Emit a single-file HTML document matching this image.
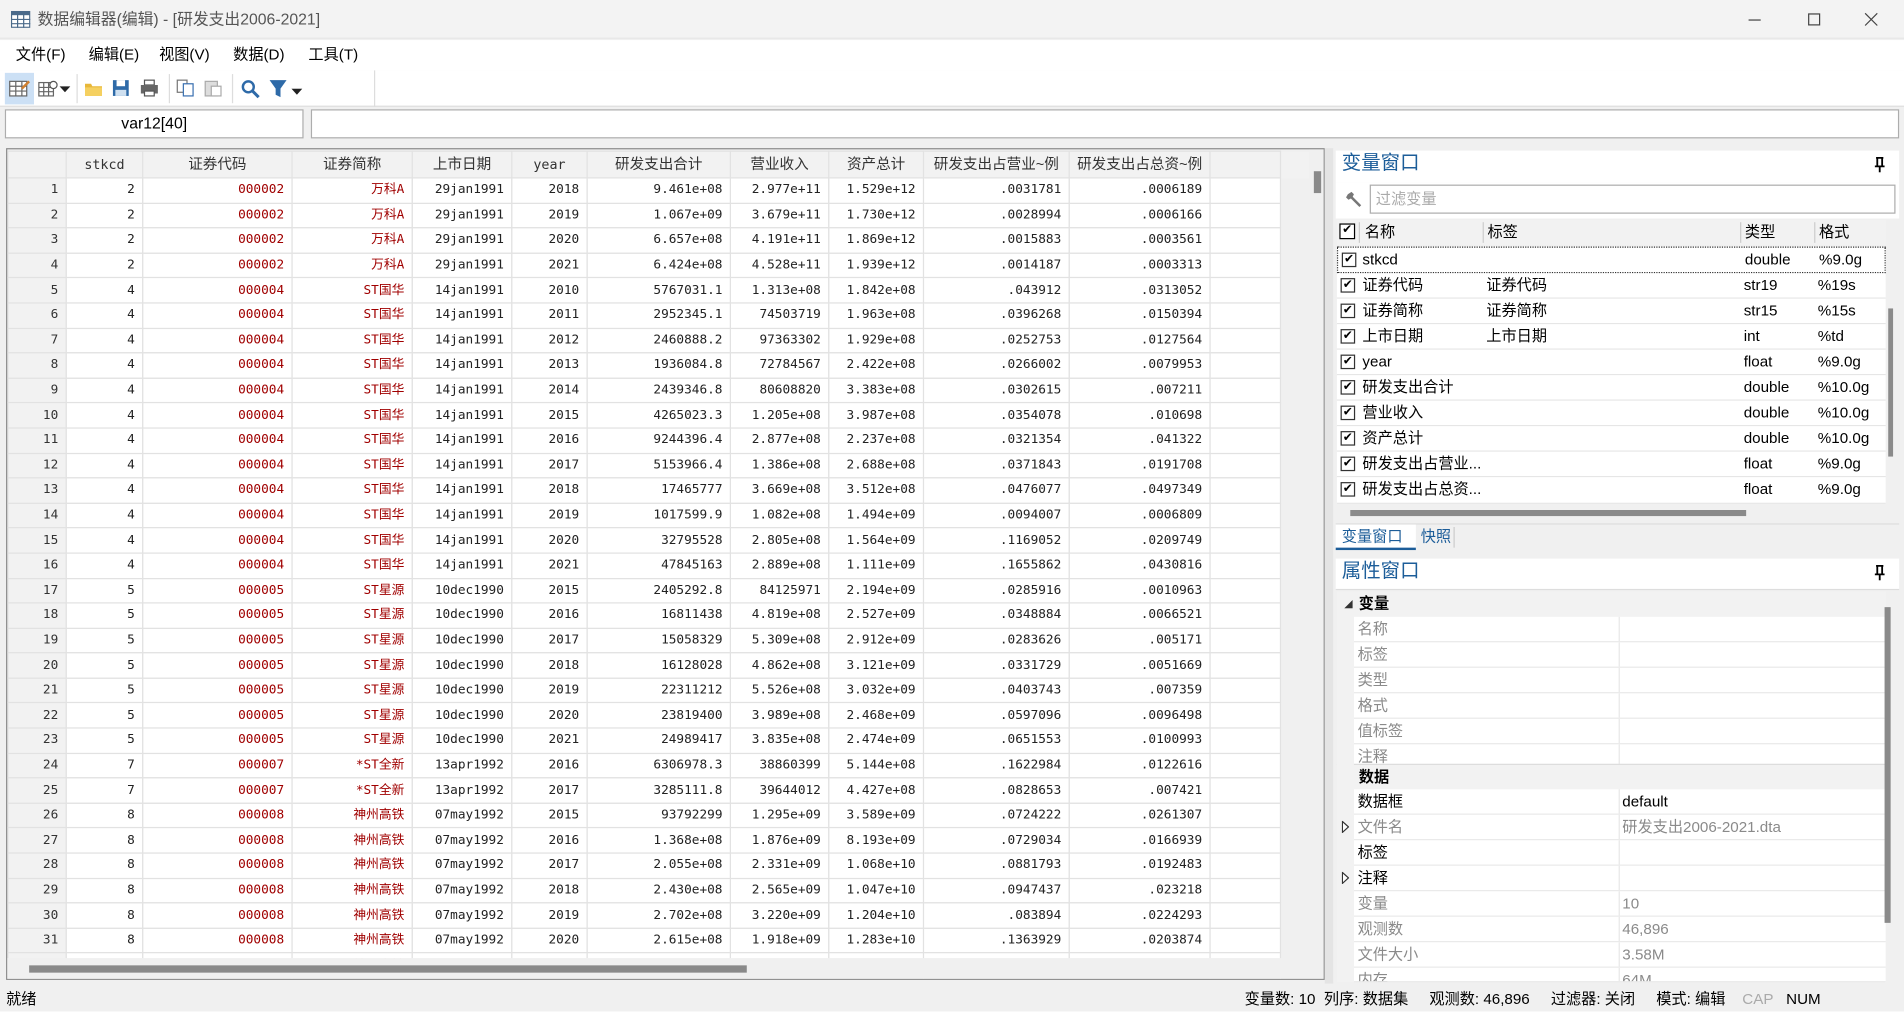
<!DOCTYPE html>
<html><head><meta charset="utf-8">
<style>
*{box-sizing:border-box;margin:0;padding:0}
html,body{width:1904px;height:1012px;overflow:hidden;background:#fff}
#w{position:absolute;left:0;top:0;width:1568px;height:833px;transform:scale(1.214286);transform-origin:0 0;background:#f0f0f0;font-family:"Liberation Sans","Noto Sans CJK SC",sans-serif;font-size:12px;color:#000;overflow:hidden;line-height:15px}
.a{position:absolute}
#title{left:0;top:0;width:1568px;height:32px;background:#f3f3f3;border-bottom:1px solid #e6e6e6}
#menu{left:0;top:33px;width:1568px;height:25px;background:#fff}
#menu span{position:absolute;top:5px;font-size:12.5px}
#tb{left:0;top:58px;width:1568px;height:30px;background:#fff;border-bottom:1px solid #ddd}
.box{background:#fff;border:1px solid #adadad}
#grid{left:5px;top:122px;width:1086px;height:685px;background:#f0f0f0;border:1px solid #8a8a8a;overflow:hidden}
table{border-collapse:collapse;table-layout:fixed;position:absolute;left:0;top:1px}
td{height:20.6px;line-height:13px;border:1px solid #e2e2e2;background:#fff;text-align:right;padding:0 6px;font-family:"DejaVu Sans Mono","Noto Sans CJK SC",monospace;font-size:10.5px;white-space:nowrap;overflow:hidden;color:#222;vertical-align:middle}
tr.h td{height:22px;background:#f2f2f2;text-align:center;font-family:"Liberation Sans","Noto Sans CJK SC",sans-serif;font-size:12px;color:#333}
tr.h td.m{font-family:"DejaVu Sans Mono",monospace;font-size:11px}
td.n{background:#f2f2f2;color:#333}
td.r{color:#a00000}
td.e{background:#fff}
td.g{background:#f0f0f0;border:none}
#right{left:1098px;top:122px;width:468px;height:687px;background:#f0f0f0}
.ptitle{font-size:16px;color:#1c5d99;line-height:20px}
.vrow{position:absolute;left:1101px;width:452px;height:21px;border-bottom:1px solid #e6e6e6;background:#fff;font-size:12.5px}
.vrow span{position:absolute;top:3px;line-height:15px}
.cb{position:absolute;left:3px;top:4px;width:12px;height:12px;border:1px solid #333;background:#fff;font-size:10px;line-height:10px;text-align:center}
.prow{position:absolute;left:1115px;width:438px;height:20.8px;border-bottom:1px solid #e8e8e8;background:#fff;font-size:12.5px;color:#8a8a8a}
.prow span{position:absolute;top:3px;line-height:15px}
.prow .v{left:221px}
.prow .l{left:3px}
.prow:after{content:"";position:absolute;left:218px;top:0;bottom:0;border-left:1px solid #e8e8e8}
.sec{position:absolute;left:1101px;width:452px;height:21px;background:#f2f2f2;font-weight:bold;font-size:12.5px}
.sec span{line-height:15px}
#status{left:0;top:813px;width:1568px;height:20px;background:#f0f0f0;font-size:12.5px}
</style></head><body><div id="w">

<div class="a" id="title">
<svg class="a" style="left:9px;top:9px" width="16" height="14" viewBox="0 0 16 14"><rect x=".5" y=".5" width="15" height="13" fill="#fff" stroke="#4a6a8a"/><rect x=".5" y=".5" width="15" height="3" fill="#4a6a8a"/><path d="M5.5 3v11M10.5 3v11M0 7h16M0 10.5h16" stroke="#4a6a8a"/></svg>
<span class="a" style="left:31px;top:8px;font-size:13px;color:#555">数据编辑器(编辑) - [研发支出2006-2021]</span>
<div class="a" style="left:1440px;top:16px;width:10px;border-top:1px solid #444"></div>
<div class="a" style="left:1489px;top:11px;width:10px;height:10px;border:1px solid #444"></div>
<svg class="a" style="left:1535px;top:10px" width="12" height="12"><path d="M1 1l10 10M11 1L1 11" stroke="#444"/></svg>
</div>

<div class="a" id="menu">
<span style="left:13px">文件(F)</span><span style="left:73px">编辑(E)</span><span style="left:131px">视图(V)</span><span style="left:192px">数据(D)</span><span style="left:254px">工具(T)</span>
</div>

<div class="a" id="tb">
<div class="a" style="left:4px;top:2px;width:24px;height:26px;background:#cce0f5"></div>
<svg class="a" style="left:7px;top:7px" width="18" height="16"><rect x="1" y="2" width="14" height="12" fill="#fff" stroke="#666"/><path d="M1 6h14M1 10h14M6 2v12M11 2v12" stroke="#666"/><path d="M11 8l6-6" stroke="#d08030" stroke-width="2"/></svg>
<svg class="a" style="left:31px;top:7px" width="18" height="16"><rect x="1" y="3" width="12" height="11" fill="#fff" stroke="#666"/><path d="M1 7h12M1 10.5h12M5 3v11M9 3v11" stroke="#666"/><circle cx="13" cy="5" r="3" fill="#fff" stroke="#555"/></svg>
<svg class="a" style="left:49px;top:13px" width="9" height="5"><path d="M0 0h9L4.5 5z" fill="#222"/></svg>
<div class="a" style="left:63px;top:3px;height:24px;border-left:1px solid #ddd"></div>
<svg class="a" style="left:69px;top:8px" width="16" height="14"><path d="M1 3h5l1 2h8v8H1z" fill="#e8b83a"/><path d="M1 6h14v7H1z" fill="#f5d060"/></svg>
<svg class="a" style="left:92px;top:7px" width="15" height="15"><rect x="1" y="1" width="13" height="13" fill="#2e6aa8"/><rect x="4" y="1" width="7" height="5" fill="#fff"/><rect x="3" y="9" width="9" height="5" fill="#cfe0f0"/></svg>
<svg class="a" style="left:115px;top:7px" width="16" height="15"><rect x="4" y="1" width="8" height="4" fill="#fff" stroke="#555"/><rect x="1" y="5" width="14" height="7" fill="#666"/><rect x="4" y="10" width="8" height="4" fill="#fff" stroke="#555"/></svg>
<div class="a" style="left:139px;top:3px;height:24px;border-left:1px solid #ddd"></div>
<svg class="a" style="left:145px;top:7px" width="16" height="15"><rect x="1" y="1" width="8" height="10" fill="#fff" stroke="#777"/><rect x="6" y="4" width="8" height="10" fill="#fff" stroke="#3a70b0"/></svg>
<svg class="a" style="left:168px;top:7px" width="16" height="15"><rect x="1" y="2" width="10" height="12" fill="#ddd" stroke="#aaa"/><rect x="6" y="6" width="8" height="8" fill="#fff" stroke="#aaa"/></svg>
<div class="a" style="left:191px;top:3px;height:24px;border-left:1px solid #ddd"></div>
<svg class="a" style="left:198px;top:7px" width="16" height="16"><circle cx="6.5" cy="6.5" r="4.5" fill="none" stroke="#2e6aa8" stroke-width="2"/><path d="M10 10l5 5" stroke="#2e6aa8" stroke-width="2.5"/></svg>
<svg class="a" style="left:221px;top:7px" width="16" height="16"><path d="M1 1h14l-5 7v7l-4-2V8z" fill="#2e6aa8"/></svg>
<svg class="a" style="left:240px;top:15px" width="9" height="5"><path d="M0 0h9L4.5 5z" fill="#222"/></svg>
<div class="a" style="left:308px;top:0;height:30px;border-left:1px solid #ddd"></div>
</div>

<div class="a box" style="left:4px;top:90px;width:246px;height:24px;text-align:center;font-size:13px;line-height:22px">var12[40]</div>
<div class="a box" style="left:256px;top:90px;width:1308px;height:24px"></div>

<div class="a" id="grid">
<table>
<colgroup><col style="width:48px"><col style="width:63px"><col style="width:123px"><col style="width:99px"><col style="width:82px"><col style="width:62px"><col style="width:118px"><col style="width:81px"><col style="width:78px"><col style="width:120px"><col style="width:116px"><col style="width:58px"><col style="width:24px"></colgroup>
<tr class="h"><td></td><td class="m">stkcd</td><td>证券代码</td><td>证券简称</td><td>上市日期</td><td class="m">year</td><td>研发支出合计</td><td>营业收入</td><td>资产总计</td><td>研发支出占营业~例</td><td>研发支出占总资~例</td><td></td><td class="g"></td></tr>
<tr><td class="n">1</td><td>2</td><td class="r">000002</td><td class="r">万科A</td><td>29jan1991</td><td>2018</td><td>9.461e+08</td><td>2.977e+11</td><td>1.529e+12</td><td>.0031781</td><td>.0006189</td><td class="e"></td><td class="g"></td></tr>
<tr><td class="n">2</td><td>2</td><td class="r">000002</td><td class="r">万科A</td><td>29jan1991</td><td>2019</td><td>1.067e+09</td><td>3.679e+11</td><td>1.730e+12</td><td>.0028994</td><td>.0006166</td><td class="e"></td><td class="g"></td></tr>
<tr><td class="n">3</td><td>2</td><td class="r">000002</td><td class="r">万科A</td><td>29jan1991</td><td>2020</td><td>6.657e+08</td><td>4.191e+11</td><td>1.869e+12</td><td>.0015883</td><td>.0003561</td><td class="e"></td><td class="g"></td></tr>
<tr><td class="n">4</td><td>2</td><td class="r">000002</td><td class="r">万科A</td><td>29jan1991</td><td>2021</td><td>6.424e+08</td><td>4.528e+11</td><td>1.939e+12</td><td>.0014187</td><td>.0003313</td><td class="e"></td><td class="g"></td></tr>
<tr><td class="n">5</td><td>4</td><td class="r">000004</td><td class="r">ST国华</td><td>14jan1991</td><td>2010</td><td>5767031.1</td><td>1.313e+08</td><td>1.842e+08</td><td>.043912</td><td>.0313052</td><td class="e"></td><td class="g"></td></tr>
<tr><td class="n">6</td><td>4</td><td class="r">000004</td><td class="r">ST国华</td><td>14jan1991</td><td>2011</td><td>2952345.1</td><td>74503719</td><td>1.963e+08</td><td>.0396268</td><td>.0150394</td><td class="e"></td><td class="g"></td></tr>
<tr><td class="n">7</td><td>4</td><td class="r">000004</td><td class="r">ST国华</td><td>14jan1991</td><td>2012</td><td>2460888.2</td><td>97363302</td><td>1.929e+08</td><td>.0252753</td><td>.0127564</td><td class="e"></td><td class="g"></td></tr>
<tr><td class="n">8</td><td>4</td><td class="r">000004</td><td class="r">ST国华</td><td>14jan1991</td><td>2013</td><td>1936084.8</td><td>72784567</td><td>2.422e+08</td><td>.0266002</td><td>.0079953</td><td class="e"></td><td class="g"></td></tr>
<tr><td class="n">9</td><td>4</td><td class="r">000004</td><td class="r">ST国华</td><td>14jan1991</td><td>2014</td><td>2439346.8</td><td>80608820</td><td>3.383e+08</td><td>.0302615</td><td>.007211</td><td class="e"></td><td class="g"></td></tr>
<tr><td class="n">10</td><td>4</td><td class="r">000004</td><td class="r">ST国华</td><td>14jan1991</td><td>2015</td><td>4265023.3</td><td>1.205e+08</td><td>3.987e+08</td><td>.0354078</td><td>.010698</td><td class="e"></td><td class="g"></td></tr>
<tr><td class="n">11</td><td>4</td><td class="r">000004</td><td class="r">ST国华</td><td>14jan1991</td><td>2016</td><td>9244396.4</td><td>2.877e+08</td><td>2.237e+08</td><td>.0321354</td><td>.041322</td><td class="e"></td><td class="g"></td></tr>
<tr><td class="n">12</td><td>4</td><td class="r">000004</td><td class="r">ST国华</td><td>14jan1991</td><td>2017</td><td>5153966.4</td><td>1.386e+08</td><td>2.688e+08</td><td>.0371843</td><td>.0191708</td><td class="e"></td><td class="g"></td></tr>
<tr><td class="n">13</td><td>4</td><td class="r">000004</td><td class="r">ST国华</td><td>14jan1991</td><td>2018</td><td>17465777</td><td>3.669e+08</td><td>3.512e+08</td><td>.0476077</td><td>.0497349</td><td class="e"></td><td class="g"></td></tr>
<tr><td class="n">14</td><td>4</td><td class="r">000004</td><td class="r">ST国华</td><td>14jan1991</td><td>2019</td><td>1017599.9</td><td>1.082e+08</td><td>1.494e+09</td><td>.0094007</td><td>.0006809</td><td class="e"></td><td class="g"></td></tr>
<tr><td class="n">15</td><td>4</td><td class="r">000004</td><td class="r">ST国华</td><td>14jan1991</td><td>2020</td><td>32795528</td><td>2.805e+08</td><td>1.564e+09</td><td>.1169052</td><td>.0209749</td><td class="e"></td><td class="g"></td></tr>
<tr><td class="n">16</td><td>4</td><td class="r">000004</td><td class="r">ST国华</td><td>14jan1991</td><td>2021</td><td>47845163</td><td>2.889e+08</td><td>1.111e+09</td><td>.1655862</td><td>.0430816</td><td class="e"></td><td class="g"></td></tr>
<tr><td class="n">17</td><td>5</td><td class="r">000005</td><td class="r">ST星源</td><td>10dec1990</td><td>2015</td><td>2405292.8</td><td>84125971</td><td>2.194e+09</td><td>.0285916</td><td>.0010963</td><td class="e"></td><td class="g"></td></tr>
<tr><td class="n">18</td><td>5</td><td class="r">000005</td><td class="r">ST星源</td><td>10dec1990</td><td>2016</td><td>16811438</td><td>4.819e+08</td><td>2.527e+09</td><td>.0348884</td><td>.0066521</td><td class="e"></td><td class="g"></td></tr>
<tr><td class="n">19</td><td>5</td><td class="r">000005</td><td class="r">ST星源</td><td>10dec1990</td><td>2017</td><td>15058329</td><td>5.309e+08</td><td>2.912e+09</td><td>.0283626</td><td>.005171</td><td class="e"></td><td class="g"></td></tr>
<tr><td class="n">20</td><td>5</td><td class="r">000005</td><td class="r">ST星源</td><td>10dec1990</td><td>2018</td><td>16128028</td><td>4.862e+08</td><td>3.121e+09</td><td>.0331729</td><td>.0051669</td><td class="e"></td><td class="g"></td></tr>
<tr><td class="n">21</td><td>5</td><td class="r">000005</td><td class="r">ST星源</td><td>10dec1990</td><td>2019</td><td>22311212</td><td>5.526e+08</td><td>3.032e+09</td><td>.0403743</td><td>.007359</td><td class="e"></td><td class="g"></td></tr>
<tr><td class="n">22</td><td>5</td><td class="r">000005</td><td class="r">ST星源</td><td>10dec1990</td><td>2020</td><td>23819400</td><td>3.989e+08</td><td>2.468e+09</td><td>.0597096</td><td>.0096498</td><td class="e"></td><td class="g"></td></tr>
<tr><td class="n">23</td><td>5</td><td class="r">000005</td><td class="r">ST星源</td><td>10dec1990</td><td>2021</td><td>24989417</td><td>3.835e+08</td><td>2.474e+09</td><td>.0651553</td><td>.0100993</td><td class="e"></td><td class="g"></td></tr>
<tr><td class="n">24</td><td>7</td><td class="r">000007</td><td class="r">*ST全新</td><td>13apr1992</td><td>2016</td><td>6306978.3</td><td>38860399</td><td>5.144e+08</td><td>.1622984</td><td>.0122616</td><td class="e"></td><td class="g"></td></tr>
<tr><td class="n">25</td><td>7</td><td class="r">000007</td><td class="r">*ST全新</td><td>13apr1992</td><td>2017</td><td>3285111.8</td><td>39644012</td><td>4.427e+08</td><td>.0828653</td><td>.007421</td><td class="e"></td><td class="g"></td></tr>
<tr><td class="n">26</td><td>8</td><td class="r">000008</td><td class="r">神州高铁</td><td>07may1992</td><td>2015</td><td>93792299</td><td>1.295e+09</td><td>3.589e+09</td><td>.0724222</td><td>.0261307</td><td class="e"></td><td class="g"></td></tr>
<tr><td class="n">27</td><td>8</td><td class="r">000008</td><td class="r">神州高铁</td><td>07may1992</td><td>2016</td><td>1.368e+08</td><td>1.876e+09</td><td>8.193e+09</td><td>.0729034</td><td>.0166939</td><td class="e"></td><td class="g"></td></tr>
<tr><td class="n">28</td><td>8</td><td class="r">000008</td><td class="r">神州高铁</td><td>07may1992</td><td>2017</td><td>2.055e+08</td><td>2.331e+09</td><td>1.068e+10</td><td>.0881793</td><td>.0192483</td><td class="e"></td><td class="g"></td></tr>
<tr><td class="n">29</td><td>8</td><td class="r">000008</td><td class="r">神州高铁</td><td>07may1992</td><td>2018</td><td>2.430e+08</td><td>2.565e+09</td><td>1.047e+10</td><td>.0947437</td><td>.023218</td><td class="e"></td><td class="g"></td></tr>
<tr><td class="n">30</td><td>8</td><td class="r">000008</td><td class="r">神州高铁</td><td>07may1992</td><td>2019</td><td>2.702e+08</td><td>3.220e+09</td><td>1.204e+10</td><td>.083894</td><td>.0224293</td><td class="e"></td><td class="g"></td></tr>
<tr><td class="n">31</td><td>8</td><td class="r">000008</td><td class="r">神州高铁</td><td>07may1992</td><td>2020</td><td>2.615e+08</td><td>1.918e+09</td><td>1.283e+10</td><td>.1363929</td><td>.0203874</td><td class="e"></td><td class="g"></td></tr>
<tr><td class="n">32</td><td>8</td><td class="r">000008</td><td class="r">神州高铁</td><td>07may1992</td><td>2021</td><td></td><td></td><td></td><td></td><td></td><td class="e"></td><td class="g"></td></tr>
</table>
<div class="a" style="left:1072px;top:0;width:14px;height:685px;background:#f0f0f0"></div>
<div class="a" style="left:1076px;top:18px;width:6px;height:18px;background:#8a8a8a"></div>
<div class="a" style="left:0;top:666px;width:1072px;height:19px;background:#f0f0f0"></div>
<div class="a" style="left:18px;top:672px;width:591px;height:6px;background:#8a8a8a"></div>
</div>
<div class="a" style="left:1091px;top:122px;width:7px;height:688px;background:#e4e4e4"></div>

<div class="a" id="right"></div>
<div class="a" style="left:1100px;top:124px;width:464px;height:26px;background:#fff"></div>
<span class="a ptitle" style="left:1105px;top:125px">变量窗口</span>
<svg class="a" style="left:1543px;top:129px" width="10" height="13"><path d="M2 1h6M3 1v7M7 1v7M1 8h8M5 8v5" stroke="#000" stroke-width="1.5" fill="none"/></svg>
<div class="a" style="left:1100px;top:150px;width:464px;height:30px;background:#fff"></div>
<svg class="a" style="left:1107px;top:156px" width="16" height="16"><path d="M3 4l3-2 2 2-1 2 7 7-1.5 1.5-7-7-2 1-2-2z" fill="#777"/></svg>
<div class="a box" style="left:1128px;top:152px;width:433px;height:24px;color:#aaa;font-size:12.5px;padding:4px 4px">过滤变量</div>
<div class="a" style="left:1101px;top:181px;width:452px;height:21px;background:#f2f2f2;font-size:12.5px">
<div class="cb" style="left:2px;top:3px;width:13px;height:13px;border-color:#000">✔</div>
<span class="a" style="left:23px;top:3px">名称</span><span class="a" style="left:124px;top:3px">标签</span><span class="a" style="left:336px;top:3px">类型</span><span class="a" style="left:397px;top:3px">格式</span>
<div class="a" style="left:18px;top:2px;height:17px;border-left:1px solid #ccc"></div><div class="a" style="left:120px;top:2px;height:17px;border-left:1px solid #ccc"></div><div class="a" style="left:332px;top:2px;height:17px;border-left:1px solid #ccc"></div><div class="a" style="left:393px;top:2px;height:17px;border-left:1px solid #ccc"></div>
</div>
<div class="vrow" style="top:203px;height:22px;border:1px dotted #333"><div class="cb">✔</div><span style="left:20px">stkcd</span><span style="left:335px">double</span><span style="left:396px">%9.0g</span></div>
<div class="vrow" style="top:225px"><div class="cb">✔</div><span style="left:21px">证券代码</span><span style="left:123px">证券代码</span><span style="left:335px">str19</span><span style="left:396px">%19s</span></div>
<div class="vrow" style="top:246px"><div class="cb">✔</div><span style="left:21px">证券简称</span><span style="left:123px">证券简称</span><span style="left:335px">str15</span><span style="left:396px">%15s</span></div>
<div class="vrow" style="top:267px"><div class="cb">✔</div><span style="left:21px">上市日期</span><span style="left:123px">上市日期</span><span style="left:335px">int</span><span style="left:396px">%td</span></div>
<div class="vrow" style="top:288px"><div class="cb">✔</div><span style="left:21px">year</span><span style="left:335px">float</span><span style="left:396px">%9.0g</span></div>
<div class="vrow" style="top:309px"><div class="cb">✔</div><span style="left:21px">研发支出合计</span><span style="left:335px">double</span><span style="left:396px">%10.0g</span></div>
<div class="vrow" style="top:330px"><div class="cb">✔</div><span style="left:21px">营业收入</span><span style="left:335px">double</span><span style="left:396px">%10.0g</span></div>
<div class="vrow" style="top:351px"><div class="cb">✔</div><span style="left:21px">资产总计</span><span style="left:335px">double</span><span style="left:396px">%10.0g</span></div>
<div class="vrow" style="top:372px"><div class="cb">✔</div><span style="left:21px">研发支出占营业...</span><span style="left:335px">float</span><span style="left:396px">%9.0g</span></div>
<div class="vrow" style="top:393px;height:22px"><div class="cb">✔</div><span style="left:21px">研发支出占总资...</span><span style="left:335px">float</span><span style="left:396px">%9.0g</span></div>
<div class="a" style="left:1553px;top:181px;width:11px;height:234px;background:#f0f0f0"></div>
<div class="a" style="left:1555px;top:254px;width:4px;height:122px;background:#8a8a8a"></div>
<div class="a" style="left:1112px;top:420px;width:326px;height:5px;background:#8a8a8a"></div>
<div class="a" style="left:1100px;top:431px;width:464px;height:1px;background:#ddd"></div>
<div class="a" style="left:1100px;top:432px;width:66px;height:21px;background:#fff;border-bottom:2px solid #1c5d99"></div>
<span class="a" style="left:1105px;top:435px;font-size:12.5px;color:#1c5d99">变量窗口</span>
<span class="a" style="left:1170px;top:435px;font-size:12.5px;color:#1c5d99">快照</span>
<div class="a" style="left:1197px;top:434px;height:17px;border-left:1px solid #ccc"></div>
<div class="a" style="left:1100px;top:460px;width:464px;height:26px;background:#fff;border-bottom:1px solid #ddd"></div>
<span class="a ptitle" style="left:1105px;top:461px">属性窗口</span>
<svg class="a" style="left:1543px;top:465px" width="10" height="13"><path d="M2 1h6M3 1v7M7 1v7M1 8h8M5 8v5" stroke="#000" stroke-width="1.5" fill="none"/></svg>

<div class="sec" style="top:487px"><svg class="a" style="left:6px;top:7px" width="7" height="7"><path d="M7 0v7H0z" fill="#333"/></svg><span class="a" style="left:18px;top:3px">变量</span></div>
<div class="prow" style="top:508px"><span class="l">名称</span></div>
<div class="prow" style="top:529px"><span class="l">标签</span></div>
<div class="prow" style="top:550px"><span class="l">类型</span></div>
<div class="prow" style="top:571px"><span class="l">格式</span></div>
<div class="prow" style="top:592px"><span class="l">值标签</span></div>
<div class="prow" style="top:613px"><span class="l">注释</span></div>
<div class="sec" style="top:629px;border-top:1px solid #ddd"><svg class="a" style="left:6px;top:7px" width="7" height="7"><path d="M7 0v7H0z" fill="#333"/></svg><span class="a" style="left:18px;top:3px">数据</span></div>
<div class="prow" style="top:650px;color:#000"><span class="l">数据框</span><span class="v">default</span></div>
<div class="prow" style="top:671px"><span class="l">文件名</span><span class="v">研发支出2006-2021.dta</span></div>
<div class="prow" style="top:692px;color:#000"><span class="l">标签</span></div>
<div class="prow" style="top:713px;color:#000"><span class="l">注释</span></div>
<div class="prow" style="top:734px"><span class="l">变量</span><span class="v">10</span></div>
<div class="prow" style="top:755px"><span class="l">观测数</span><span class="v">46,896</span></div>
<div class="prow" style="top:776px"><span class="l">文件大小</span><span class="v">3.58M</span></div>
<div class="prow" style="top:797px;height:12px;overflow:hidden"><span class="l">内存</span><span class="v">64M</span></div>
<div class="a" style="left:1101px;top:508px;width:14px;height:301px;background:#f2f2f2"></div>
<svg class="a" style="left:1105px;top:676px" width="6" height="10"><path d="M.5 .5L5.5 5 .5 9.5z" fill="#fff" stroke="#333"/></svg>
<svg class="a" style="left:1105px;top:718px" width="6" height="10"><path d="M.5 .5L5.5 5 .5 9.5z" fill="#fff" stroke="#333"/></svg>
<div class="a" style="left:1553px;top:487px;width:11px;height:322px;background:#f0f0f0"></div>
<div class="a" style="left:1552px;top:500px;width:5px;height:260px;background:#8a8a8a"></div>

<div class="a" id="status">
<span class="a" style="left:5px;top:3px">就绪</span>
<span class="a" style="left:1025px;top:3px;white-space:nowrap">变量数: 10&nbsp; 列序: 数据集&nbsp;&nbsp;&nbsp;&nbsp; 观测数: 46,896&nbsp;&nbsp;&nbsp;&nbsp; 过滤器: 关闭&nbsp;&nbsp;&nbsp;&nbsp; 模式: 编辑&nbsp;&nbsp;&nbsp; <span style="color:#aaa">CAP</span>&nbsp;&nbsp; NUM</span>
</div>
</div></body></html>
